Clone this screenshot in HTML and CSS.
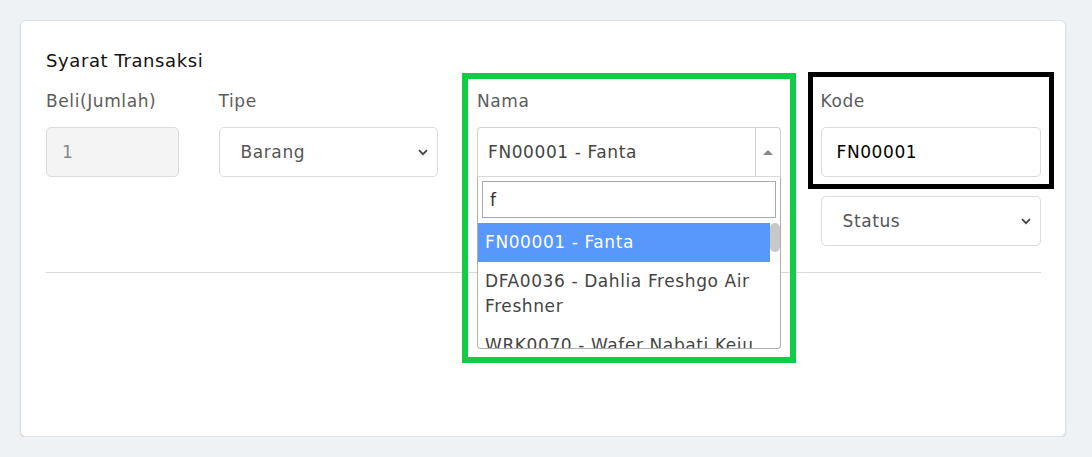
FILE: index.html
```html
<!DOCTYPE html>
<html lang="id">
<head>
<meta charset="utf-8">
<title>Syarat Transaksi</title>
<link rel="stylesheet" href="styles.css">
</head>
<body>
<div class="card">
  <h5 class="title">Syarat Transaksi</h5>
  <div class="row">
    <div class="col col-beli">
      <label class="lbl">Beli(Jumlah)</label>
      <div class="ctrl ctrl-disabled">1</div>
    </div>
    <div class="col col-tipe">
      <label class="lbl">Tipe</label>
      <div class="ctrl ctrl-select">
        <span>Barang</span>
        <svg class="chev" width="10" height="7" viewBox="0 0 10 7"><path d="M1 1.2 L5 5.2 L9 1.2" fill="none" stroke="#444" stroke-width="1.8"/></svg>
      </div>
    </div>
    <div class="col col-nama">
      <div class="mark mark-green"></div>
      <label class="lbl">Nama</label>
      <div class="s2">
        <div class="s2-sel">
          <span class="s2-text">FN00001 - Fanta</span>
          <span class="s2-arrow"><span class="tri"></span></span>
        </div>
        <div class="s2-drop">
          <div class="s2-search"><div class="s2-input">f</div></div>
          <div class="s2-results">
            <div class="opt opt-hl">FN00001 - Fanta</div>
            <div class="opt">DFA0036 - Dahlia Freshgo Air Freshner</div>
            <div class="opt">WRK0070 - Wafer Nabati Keju</div>
            <div class="thumb"></div>
          </div>
        </div>
      </div>
    </div>
    <div class="col col-kode">
      <div class="kode-group">
        <div class="mark mark-black"></div>
        <label class="lbl">Kode</label>
        <div class="ctrl ctrl-code">FN00001</div>
      </div>
      <div class="ctrl ctrl-select ctrl-status">
        <span>Status</span>
        <svg class="chev" width="10" height="7" viewBox="0 0 10 7"><path d="M1 1.2 L5 5.2 L9 1.2" fill="none" stroke="#444" stroke-width="1.8"/></svg>
      </div>
    </div>
  </div>
  <div class="divider"></div>
</div>
</body>
</html>
```

FILE: styles.css
```css
* { box-sizing: border-box; }
html, body { margin: 0; padding: 0; }
body {
  background: #eef2f5;
  padding: 20px 26px 0 20px;
  font-family: "DejaVu Sans", "Open Sans", sans-serif;
  font-size: 17px;
  letter-spacing: 0.6px;
  color: #555;
}
.card {
  width: 1046px;
  height: 417px;
  background: #fff;
  border: 1px solid #dfe3e7;
  border-radius: 6px;
  box-shadow: 0 1px 2px rgba(0,0,0,0.12);
  padding: 28px 24px 0 25px;
}
.title {
  margin: 0;
  font-size: 18px;
  font-weight: 400;
  line-height: 24px;
  color: #111;
}
.row {
  display: grid;
  grid-template-columns: 133px 219px 304px 220px;
  column-gap: 39.5px;
  margin-top: 16px;
  align-items: start;
}
.col { position: relative; display: flex; flex-direction: column; }
.lbl {
  display: block;
  line-height: 24px;
  height: 24px;
  margin-bottom: 14px;
  color: #5c5c5c;
}
.ctrl {
  height: 50px;
  border: 1px solid #dcdcdc;
  border-radius: 5px;
  display: flex;
  align-items: center;
  padding: 0 15px;
  background: #fff;
}
.ctrl-disabled { background: #f4f4f4; color: #888; }
.ctrl-select { justify-content: space-between; padding: 0 9px 0 21px; color: #555; }
.ctrl-code { color: #000; }
.ctrl-status { margin-top: 19px; }
.chev { display: block; }

.mark { position: absolute; pointer-events: none; z-index: 5; }
.mark-green { left: -15px; right: -15px; top: -16px; height: 290px; border: 6px solid #10cd45; }
.kode-group { position: relative; }
.mark-black { left: -13px; right: -13px; top: -17px; bottom: -12px; border: 5px solid #000; }

.s2 { position: relative; }
.s2-sel {
  height: 50px;
  border: 1px solid #d2d2d2;
  border-bottom-color: #d8d8d8;
  border-radius: 4px 4px 0 0;
  display: flex;
  align-items: center;
  color: #444;
}
.s2-text { flex: 1; padding-left: 10px; }
.s2-arrow {
  width: 25px;
  align-self: stretch;
  border-left: 1px solid #d2d2d2;
  display: flex;
  align-items: center;
  justify-content: center;
}
.tri {
  width: 0; height: 0;
  border-left: 5px solid transparent;
  border-right: 5px solid transparent;
  border-bottom: 5px solid #888;
}
.s2-drop {
  position: absolute;
  left: 0; right: 0; top: 50px;
  height: 172px;
  background: #fff;
  border: 1px solid #b0b0b0;
  border-top: none;
  border-radius: 0 0 4px 4px;
  z-index: 3;
  overflow: hidden;
}
.s2-search { padding: 4px 4px 5px 4px; }
.s2-input {
  height: 37px;
  border: 1px solid #aaa;
  padding: 0 7px;
  display: flex;
  align-items: center;
  color: #333;
}
.s2-results { position: relative; padding-right: 10px; }
.opt {
  padding: 7px 7px;
  line-height: 25px;
  color: #444;
}
.opt-hl { background: #5897fb; color: #fff; }
.thumb {
  position: absolute;
  right: 0; top: 0;
  width: 10px; height: 29px;
  background: #c8c8c8;
  border-radius: 5px;
}
.divider {
  height: 1px;
  background: #d9d9d9;
  margin-top: 26px;
}
```
